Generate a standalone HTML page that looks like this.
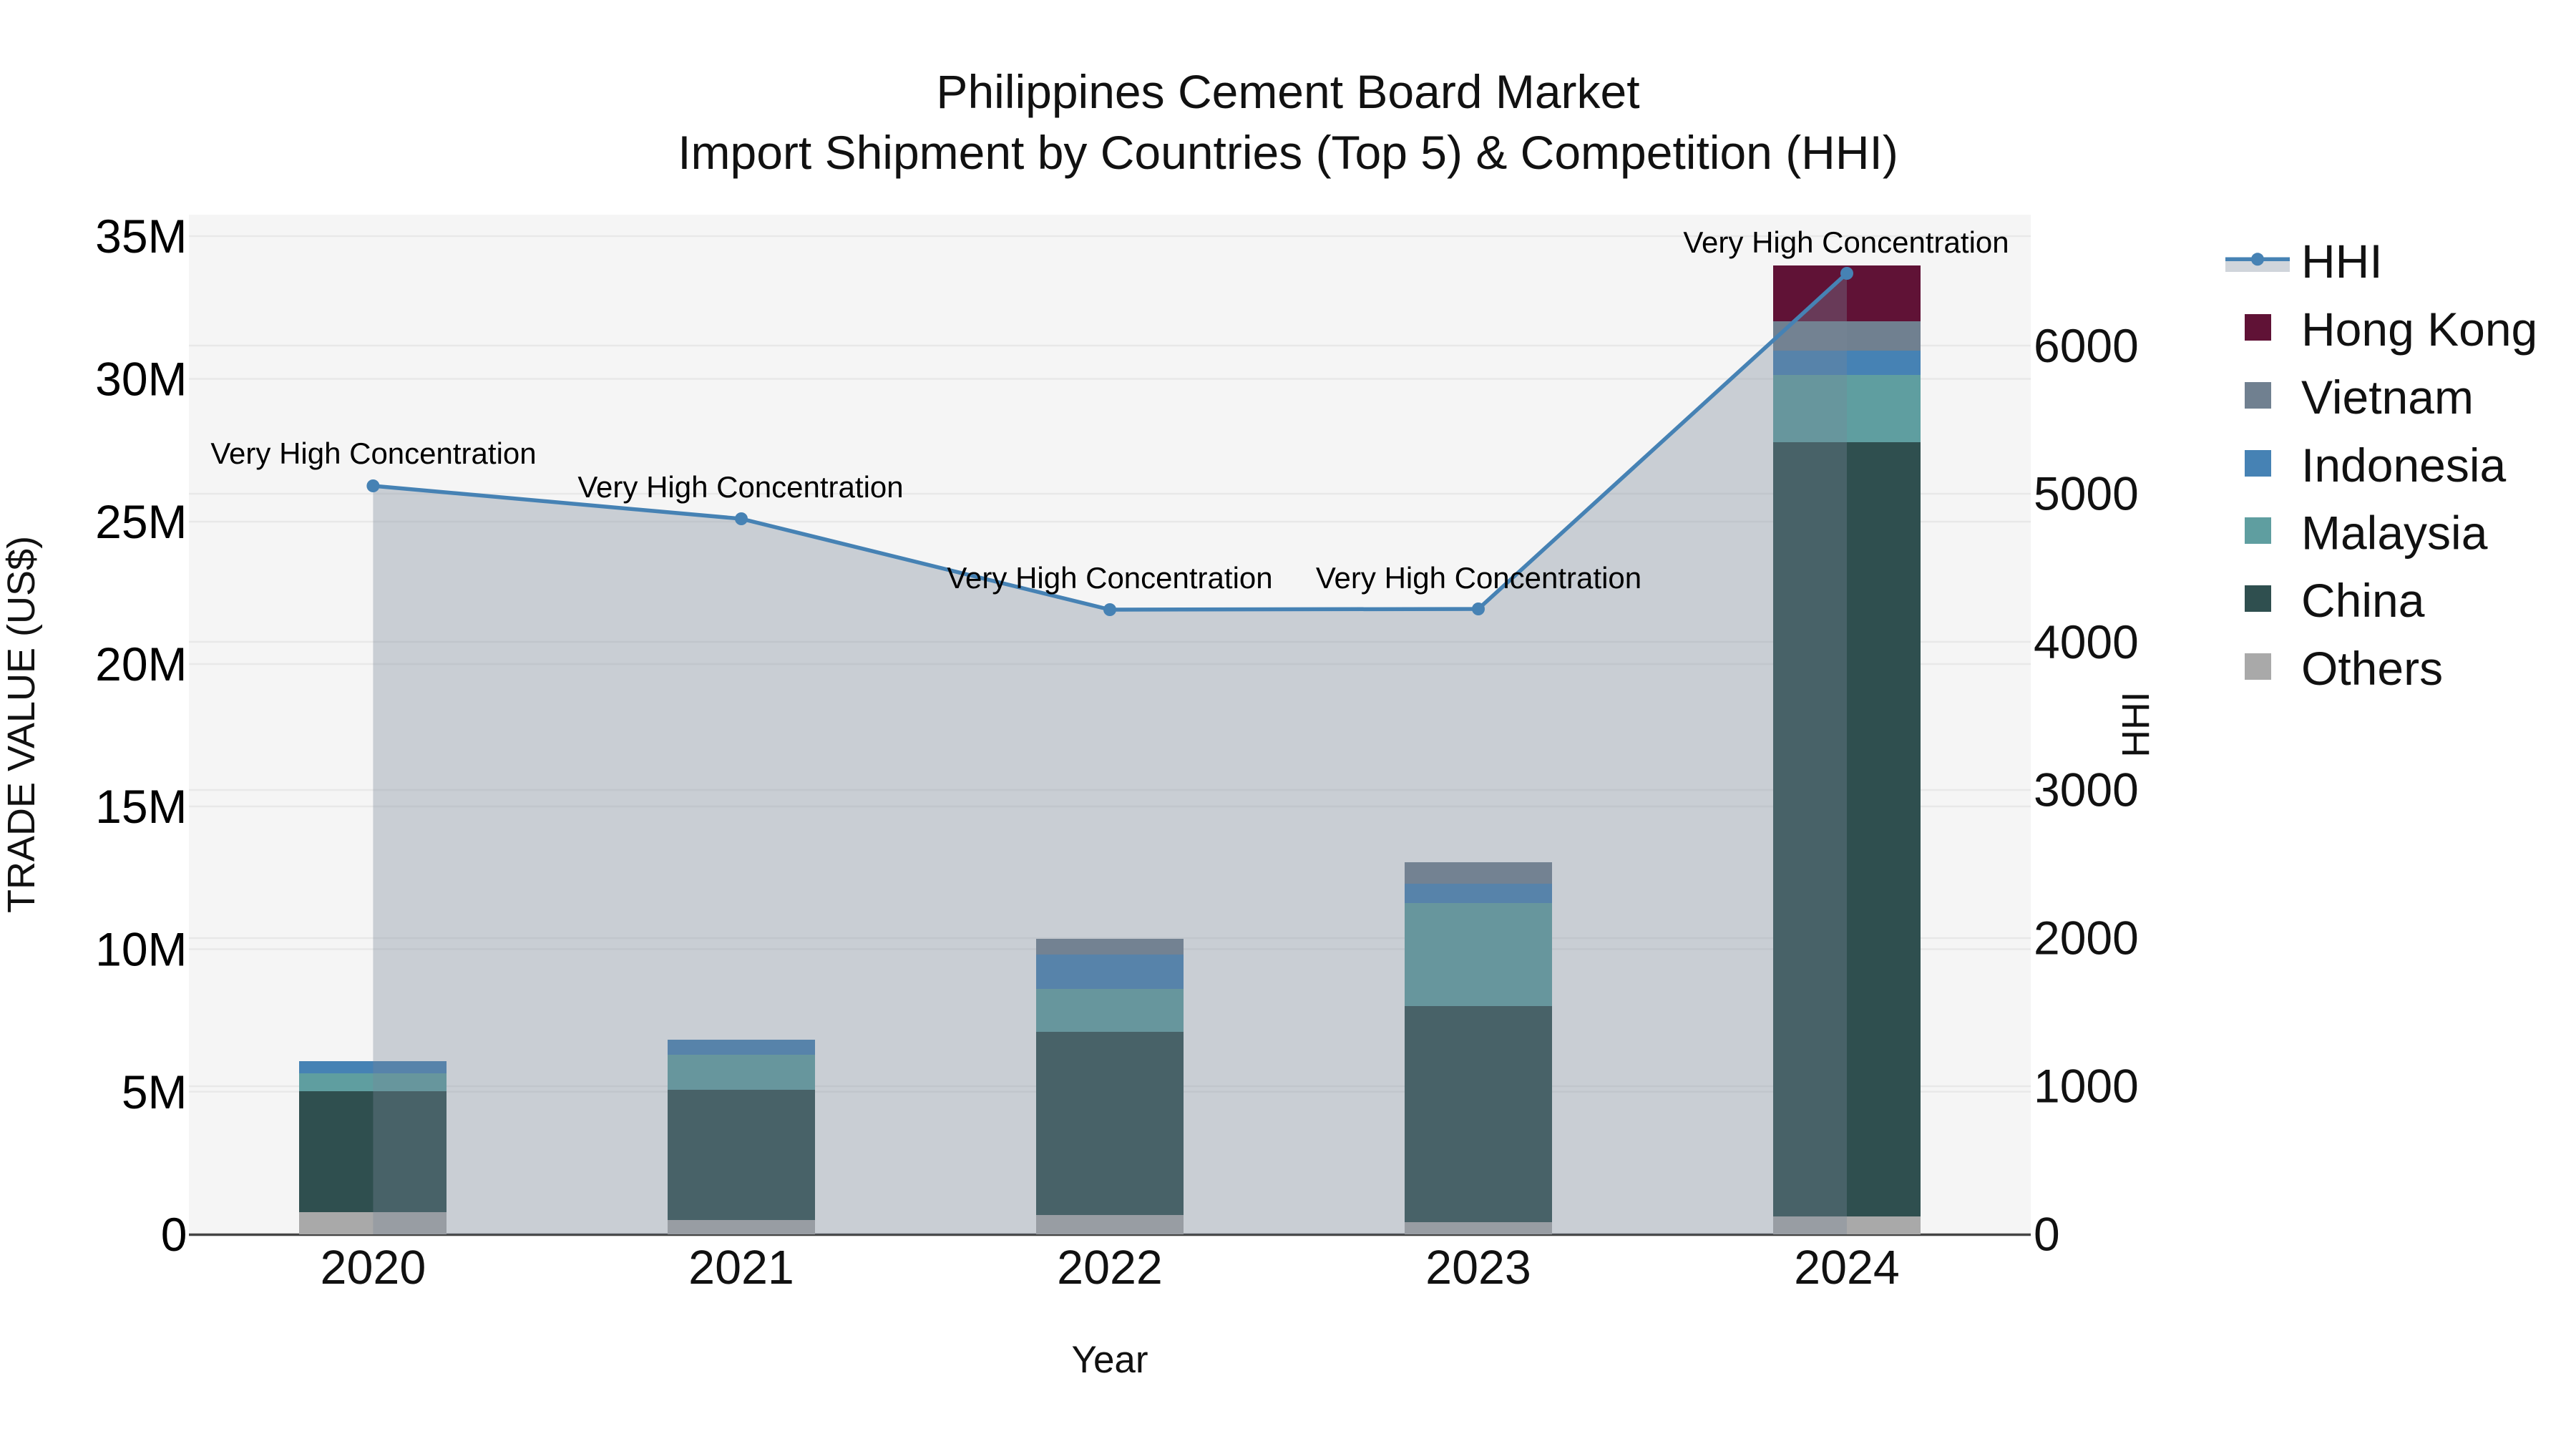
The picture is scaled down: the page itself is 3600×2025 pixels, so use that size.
<!DOCTYPE html>
<html>
<head>
<meta charset="utf-8">
<title>Philippines Cement Board Market</title>
<style>
html,body{margin:0;padding:0;background:#fff;width:3600px;height:2025px;overflow:hidden}
svg{display:block}
text{font-family:"Liberation Sans",Arial,sans-serif}
</style>
</head>
<body>
<svg width="3600" height="2025" viewBox="0 0 3600 2025" xmlns="http://www.w3.org/2000/svg">
<rect width="3600" height="2025" fill="#fff"/>
<rect x="264" y="300" width="2574" height="1425" fill="#f5f5f5"/>

<!-- gridlines -->
<g stroke="#e8e8e8" stroke-width="2.4" fill="none">
<path d="M264 330H2838M264 529.5H2838M264 729H2838M264 928H2838M264 1127H2838M264 1326.5H2838M264 1525.7H2838"/>
<path d="M264 483H2838M264 690H2838M264 897H2838M264 1104H2838M264 1311H2838M264 1518H2838"/>
</g>
<path d="M264 1725.5H2838" stroke="#444" stroke-width="3.5"/>

<!-- bars -->
<g shape-rendering="crispEdges">
<rect x="418" y="1694" width="206" height="31" fill="#a9a9a9"/>
<rect x="418" y="1525" width="206" height="169" fill="#2f4f4f"/>
<rect x="418" y="1500" width="206" height="25" fill="#5f9ea0"/>
<rect x="418" y="1483" width="206" height="17" fill="#4682b4"/>

<rect x="933" y="1705" width="206" height="20" fill="#a9a9a9"/>
<rect x="933" y="1523" width="206" height="182" fill="#2f4f4f"/>
<rect x="933" y="1474" width="206" height="49" fill="#5f9ea0"/>
<rect x="933" y="1453" width="206" height="21" fill="#4682b4"/>

<rect x="1448" y="1698" width="206" height="27" fill="#a9a9a9"/>
<rect x="1448" y="1442" width="206" height="256" fill="#2f4f4f"/>
<rect x="1448" y="1382" width="206" height="60" fill="#5f9ea0"/>
<rect x="1448" y="1334" width="206" height="48" fill="#4682b4"/>
<rect x="1448" y="1312" width="206" height="22" fill="#708090"/>

<rect x="1963" y="1708" width="206" height="17" fill="#a9a9a9"/>
<rect x="1963" y="1406" width="206" height="302" fill="#2f4f4f"/>
<rect x="1963" y="1262" width="206" height="144" fill="#5f9ea0"/>
<rect x="1963" y="1235" width="206" height="27" fill="#4682b4"/>
<rect x="1963" y="1205" width="206" height="30" fill="#708090"/>

<rect x="2478" y="1700" width="206" height="25" fill="#a9a9a9"/>
<rect x="2478" y="618" width="206" height="1082" fill="#2f4f4f"/>
<rect x="2478" y="524" width="206" height="94" fill="#5f9ea0"/>
<rect x="2478" y="490" width="206" height="34" fill="#4682b4"/>
<rect x="2478" y="449" width="206" height="41" fill="#708090"/>
<rect x="2478" y="371" width="206" height="78" fill="#601236"/>
</g>

<!-- HHI area + line -->
<path d="M521.4 1725V679L1036 725L1551 852L2066 851L2581 382V1725Z" fill="#778899" fill-opacity="0.35"/>
<path d="M521.4 679L1036 725L1551 852L2066 851L2581 382" fill="none" stroke="#4682b4" stroke-width="5.5" stroke-linejoin="round"/>
<g fill="#4682b4">
<circle cx="521.4" cy="679" r="9"/>
<circle cx="1036" cy="725" r="9"/>
<circle cx="1551" cy="852" r="9"/>
<circle cx="2066" cy="851" r="9"/>
<circle cx="2581" cy="382" r="9"/>
</g>

<!-- annotations -->
<g font-size="42" fill="#000" text-anchor="middle">
<text x="522" y="648">Very High Concentration</text>
<text x="1035" y="695">Very High Concentration</text>
<text x="1551" y="822">Very High Concentration</text>
<text x="2066.5" y="822">Very High Concentration</text>
<text x="2580" y="353">Very High Concentration</text>
</g>

<!-- title -->
<g font-size="66" fill="#111" text-anchor="middle">
<text x="1800" y="151">Philippines Cement Board Market</text>
<text x="1800" y="236">Import Shipment by Countries (Top 5) &amp; Competition (HHI)</text>
</g>

<!-- left ticks -->
<g font-size="66" fill="#000" text-anchor="end">
<text x="261.5" y="353">35M</text>
<text x="261.5" y="552.5">30M</text>
<text x="261.5" y="752">25M</text>
<text x="261.5" y="951">20M</text>
<text x="261.5" y="1150">15M</text>
<text x="261.5" y="1349.5">10M</text>
<text x="261.5" y="1549">5M</text>
<text x="261.5" y="1748">0</text>
</g>

<!-- right ticks -->
<g font-size="66" fill="#111" text-anchor="start">
<text x="2842" y="506">6000</text>
<text x="2842" y="712.5">5000</text>
<text x="2842" y="920">4000</text>
<text x="2842" y="1126.5">3000</text>
<text x="2842" y="1333.5">2000</text>
<text x="2842" y="1540.5">1000</text>
<text x="2842" y="1747.5">0</text>
</g>

<!-- x ticks -->
<g font-size="66.4" fill="#111" text-anchor="middle">
<text x="521.4" y="1794">2020</text>
<text x="1036" y="1794">2021</text>
<text x="1551" y="1794">2022</text>
<text x="2066" y="1794">2023</text>
<text x="2581" y="1794">2024</text>
</g>

<!-- axis titles -->
<text x="1551" y="1918" font-size="53" fill="#111" text-anchor="middle">Year</text>
<text transform="translate(48 1012.5) rotate(-90)" font-size="54" fill="#111" text-anchor="middle">TRADE VALUE (US$)</text>
<text transform="translate(3003 1012.5) rotate(-90)" font-size="53.5" fill="#111" text-anchor="middle">HHI</text>

<!-- legend -->
<rect x="3110" y="362" width="90" height="18" fill="#778899" fill-opacity="0.35"/>
<path d="M3110 362.3H3200" stroke="#4682b4" stroke-width="5.5"/>
<circle cx="3155" cy="362.3" r="9" fill="#4682b4"/>
<g shape-rendering="crispEdges">
<rect x="3137" y="439" width="37" height="37" fill="#601236"/>
<rect x="3137" y="534" width="37" height="37" fill="#708090"/>
<rect x="3137" y="629" width="37" height="37" fill="#4682b4"/>
<rect x="3137" y="723" width="37" height="37" fill="#5f9ea0"/>
<rect x="3137" y="818" width="37" height="37" fill="#2f4f4f"/>
<rect x="3137" y="913" width="37" height="37" fill="#a9a9a9"/>
</g>
<g font-size="66" fill="#111">
<text x="3216" y="388">HHI</text>
<text x="3216" y="483">Hong Kong</text>
<text x="3216" y="577.8">Vietnam</text>
<text x="3216" y="673">Indonesia</text>
<text x="3216" y="767.5">Malaysia</text>
<text x="3216" y="862">China</text>
<text x="3216" y="957">Others</text>
</g>
</svg>
</body>
</html>
